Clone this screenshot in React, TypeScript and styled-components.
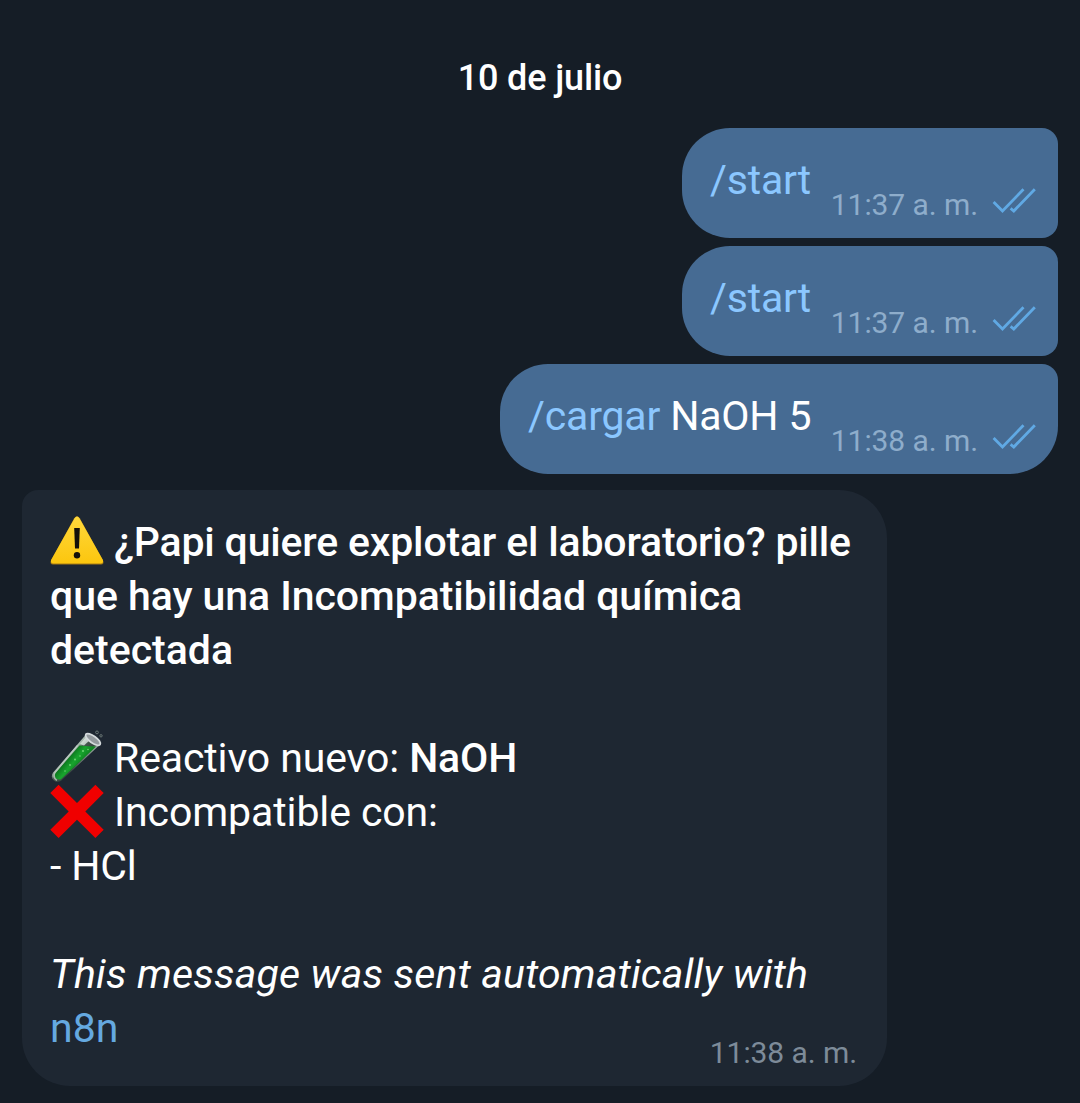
import React from "react";
import styled, { createGlobalStyle } from "styled-components";

const GlobalStyle = createGlobalStyle`
  * { box-sizing: border-box; }
  html, body { margin: 0; padding: 0; background: #151d26; }
  body { font-family: Roboto, "Noto Sans", sans-serif; }
`;

const Chat = styled.main`
  width: 1080px;
  height: 1103px;
  padding: 56px 22px 0;
  display: flex;
  flex-direction: column;
  background: #151d26;
  overflow: hidden;
`;

const DateLabel = styled.div`
  align-self: center;
  height: 72px;
  line-height: 44px;
  font-size: 36px;
  font-weight: 500;
  letter-spacing: -0.15px;
  color: #fff;
  white-space: nowrap;
`;

const Outgoing = styled.div`
  display: flex;
  flex-direction: column;
  align-items: flex-end;
  gap: 8px;
`;

const OutBubble = styled.div<{ $width: number; $last?: boolean }>`
  width: ${(p) => p.$width}px;
  height: 110px;
  padding: 25px 22px 0 28px;
  display: flex;
  justify-content: space-between;
  background: #466b93;
  border-radius: 48px 16px ${(p) => (p.$last ? 48 : 16)}px 48px;
`;

const Body = styled.span`
  font-size: 41px;
  line-height: 54px;
  letter-spacing: -0.18px;
  color: #fff;
  white-space: nowrap;
`;

const Command = styled.span`
  color: #8bc7ff;
`;

const Meta = styled.span`
  display: flex;
  padding-top: 34px;
`;

const Time = styled.time<{ $incoming?: boolean }>`
  font-size: 30px;
  line-height: 36px;
  letter-spacing: -0.08px;
  color: ${(p) => (p.$incoming ? "#7d8b99" : "#8eadcb")};
  white-space: nowrap;
`;

const CheckIcon = styled.svg`
  width: 44px;
  height: 28px;
  margin-left: 14px;
`;

const InBubble = styled.article`
  width: 865px;
  height: 596px;
  margin-top: 16px;
  padding: 25px 28px 0;
  display: flex;
  flex-direction: column;
  background: #1e2732;
  border-radius: 16px 48px 48px 48px;
`;

const Line = styled.div<{ $bold?: boolean; $italic?: boolean; $tracking?: number }>`
  height: 54px;
  display: flex;
  align-items: center;
  font-size: 41px;
  line-height: 54px;
  font-weight: ${(p) => (p.$bold ? 500 : 400)};
  font-style: ${(p) => (p.$italic ? "italic" : "normal")};
  letter-spacing: ${(p) => p.$tracking ?? 0}px;
  color: #fff;
  white-space: pre;
`;

const Strong = styled.strong`
  font-weight: 500;
`;

const Link = styled.span`
  color: #65a9e0;
`;

const Emoji = styled.svg`
  width: 54px;
  height: 54px;
  flex: none;
  margin-right: 10px;
  overflow: visible;
`;

const Footer = styled.div`
  display: flex;
  justify-content: flex-end;
  margin-top: -20px;
  padding-right: 2px;
`;

function Checks() {
  return (
    <CheckIcon viewBox="0 0 44 28" fill="none" stroke="#60a9e4" strokeWidth="2.8">
      <path d="M1.6 15 L10.5 24 L31.5 2.2" />
      <path d="M18.6 21.4 L21.8 24 L42.8 2.2" />
    </CheckIcon>
  );
}

function Warning() {
  return (
    <Emoji viewBox="0 0 54 54">
      <defs>
        <linearGradient id="warn" x1="0" y1="0" x2="0" y2="1">
          <stop offset="0" stopColor="#ffd83c" />
          <stop offset="1" stopColor="#fcc60e" />
        </linearGradient>
      </defs>
      <path d="M24.2 3.3 Q27 -1 29.8 3.3 L53 45.5 Q54.5 49.3 51 49.5 H3 Q-.5 49.3 1 45.5 Z" fill="#a77b13" />
      <path d="M24.4 3.4 Q27 -.5 29.6 3.4 L52.8 44.8 Q54 48.2 51 48.4 H3 Q0 48.2 1.2 44.8 Z" fill="url(#warn)" />
      <path d="M24.2 13 H29.8 L29 33.5 H25 Z" fill="#14100a" />
      <circle cx="27" cy="40.3" r="3.2" fill="#14100a" />
    </Emoji>
  );
}

function TestTube() {
  return (
    <Emoji viewBox="0 0 54 54">
      <defs>
        <linearGradient id="glass" gradientUnits="userSpaceOnUse" x1="20" y1="23" x2="31" y2="33">
          <stop offset="0" stopColor="#a9bab0" />
          <stop offset="0.3" stopColor="#47584f" />
          <stop offset="0.8" stopColor="#35463e" />
          <stop offset="1" stopColor="#98aa9f" />
        </linearGradient>
        <linearGradient id="liquid" gradientUnits="userSpaceOnUse" x1="20" y1="24" x2="31" y2="33">
          <stop offset="0" stopColor="#0b751d" />
          <stop offset="0.5" stopColor="#19a42e" />
          <stop offset="1" stopColor="#0d8420" />
        </linearGradient>
      </defs>
      <path d="M36 3.5 L3.2 41.5 C-.5 46.5 4.5 53 10.8 50 L49.8 13.8 Z" fill="url(#glass)" />
      <path d="M29.5 14.5 Q38 15.5 46 15.6 L10.8 48.4 Q4 49.2 4.6 43 Z" fill="url(#liquid)" />
      <path d="M36.5 5.5 L30 13 L34 14.5 L40.5 8.5 Z" fill="#e0e8e3" opacity=".8" />
      <path d="M27.5 14.5 L5 41.5 Q2.5 46.8 7 49.3" fill="none" stroke="#c4d3c9" strokeWidth="1.5" opacity=".75" />
      <g fill="#6ed473">
        <circle cx="20" cy="34" r=".9" /><circle cx="25" cy="28.5" r="1" />
        <circle cx="30" cy="25" r=".8" /><circle cx="33" cy="20" r="1" />
        <circle cx="15" cy="40" r=".8" /><circle cx="38" cy="18.5" r=".8" />
      </g>
      <ellipse cx="43" cy="8.4" rx="8.8" ry="3.4" transform="rotate(36 43 8.4)" fill="#92999d" stroke="#d4dadc" strokeWidth="1.8" />
      <g fill="none" stroke="#6d7a78" strokeWidth=".9">
        <circle cx="47" cy="1.4" r="1.4" /><circle cx="51" cy="4.8" r="1.2" />
      </g>
    </Emoji>
  );
}

function Cross() {
  return (
    <Emoji viewBox="0 0 54 54">
      <path d="M8.6 -.3 L27 18.1 L45.4 -.3 L53.7 8 L35.3 26.4 L53.7 44.8 L45.4 53.1 L27 34.7 L8.6 53.1 L.3 44.8 L18.7 26.4 L.3 8 Z" fill="#f00000" />
    </Emoji>
  );
}

const sent = [
  { command: "/start", rest: "", time: "11:37 a. m.", width: 376 },
  { command: "/start", rest: "", time: "11:37 a. m.", width: 376 },
  { command: "/cargar", rest: " NaOH 5", time: "11:38 a. m.", width: 558 },
];

export default function App() {
  return (
    <>
      <GlobalStyle />
      <Chat>
        <DateLabel>10 de julio</DateLabel>
        <Outgoing>
          {sent.map((m, i) => (
            <OutBubble key={i} $width={m.width} $last={i === sent.length - 1}>
              <Body><Command>{m.command}</Command>{m.rest}</Body>
              <Meta><Time>{m.time}</Time><Checks /></Meta>
            </OutBubble>
          ))}
        </Outgoing>
        <InBubble>
          <Line $bold $tracking={-0.18}><Warning />¿Papi quiere explotar el laboratorio? pille</Line>
          <Line $bold $tracking={-0.06}>que hay una Incompatibilidad química</Line>
          <Line $bold>detectada</Line>
          <Line />
          <Line $tracking={-0.12}><TestTube />Reactivo nuevo: <Strong>NaOH</Strong></Line>
          <Line $tracking={-0.1}><Cross />Incompatible con:</Line>
          <Line $tracking={-0.15}>- HCl</Line>
          <Line />
          <Line $italic $tracking={0.2}>This message was sent automatically with</Line>
          <Line><Link>n8n</Link></Line>
          <Footer><Time $incoming>11:38 a. m.</Time></Footer>
        </InBubble>
      </Chat>
    </>
  );
}
